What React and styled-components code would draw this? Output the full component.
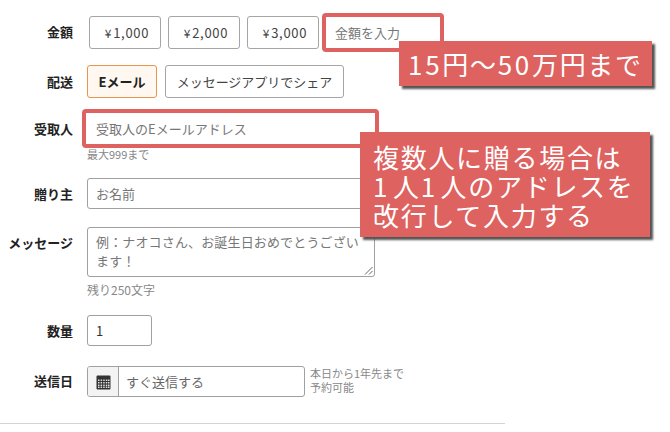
import React from 'react';
import styled, { createGlobalStyle } from 'styled-components';

const Global = createGlobalStyle`
  html, body { margin: 0; padding: 0; background: #fff; }
  body { font-family: "Noto Sans CJK JP", "Liberation Sans", sans-serif; color: #222; }
`;

const Page = styled.div`
  position: relative;
  width: 670px;
  height: 432px;
  overflow: hidden;
`;

const Form = styled.form`
  width: 505px;
  height: 424px;
  box-sizing: border-box;
  padding-top: 13px;
  border-bottom: 1px solid #d4d4d4;
`;

const Row = styled.div`
  display: flex;
  align-items: ${p => p.$top ? 'flex-start' : 'center'};
  height: ${p => p.$h}px;
  margin-bottom: ${p => p.$mb}px;
`;

const Label = styled.div`
  flex: none;
  width: 73px;
  margin-right: ${p => p.$gap || 14}px;
  padding-top: ${p => p.$pt || 0}px;
  margin-top: ${p => p.$nudge || 0}px;
  text-align: right;
  font-size: 13px;
  line-height: 18px;
  font-weight: 700;
  color: #222;
`;

const Buttons = styled.div`
  display: flex;
  gap: ${p => p.$gap}px;
  align-items: center;
`;

const Choice = styled.div`
  box-sizing: border-box;
  width: ${p => p.$w}px;
  height: 33px;
  display: flex;
  align-items: center;
  justify-content: center;
  padding-left: ${p => p.$pl || 0}px;
  border: 1px solid ${p => p.$active ? '#e8954f' : '#a5a5a5'};
  border-radius: 3px;
  background: ${p => p.$active ? '#fff8f1' : '#fff'};
  font-size: 13px;
  font-weight: ${p => p.$active ? 700 : 400};
  color: ${p => p.$active ? '#222' : '#444'};
  letter-spacing: ${p => p.$track || 0}px;
`;

const Yen = styled.span`
  margin-right: 1px;
  font-size: 12px;
`;

const Field = styled.div`
  box-sizing: border-box;
  flex: none;
  width: ${p => p.$w}px;
  height: ${p => p.$h}px;
  display: flex;
  align-items: center;
  margin-left: ${p => p.$ml || 0}px;
  padding-left: ${p => p.$pl || 8}px;
  border: ${p => p.$marked ? '4px solid #dd6260' : '1px solid #a0a0a0'};
  border-radius: ${p => p.$marked ? 4 : 3}px;
  background: #fff;
  font-size: 13px;
  color: ${p => p.$value ? '#333' : '#777'};
`;

const Stack = styled.div`
  display: flex;
  flex-direction: column;
`;

const Hint = styled.div`
  font-size: ${p => p.$size || 11}px;
  line-height: ${p => p.$lh || 14}px;
  color: #888;
  margin-top: ${p => p.$mt || 0}px;
  margin-left: ${p => p.$ml || 0}px;
`;

const TextArea = styled.div`
  position: relative;
  box-sizing: border-box;
  width: 288px;
  height: 50px;
  padding: 4px 8px 0;
  border: 1px solid #a0a0a0;
  border-radius: 3px;
  font-size: 13px;
  line-height: 19px;
  letter-spacing: 0.15px;
  color: #777;
`;

const Grip = styled.svg`
  position: absolute;
  right: 1px;
  bottom: 1px;
  width: 9px;
  height: 9px;
`;

const DateGroup = styled.div`
  box-sizing: border-box;
  flex: none;
  width: 218px;
  height: 31px;
  display: flex;
  border: 1px solid #a0a0a0;
  border-radius: 3px;
  overflow: hidden;
`;

const Addon = styled.div`
  flex: none;
  width: 30px;
  display: flex;
  align-items: center;
  justify-content: center;
  background: #f3f3f3;
  border-right: 1px solid #a0a0a0;
`;

const DateText = styled.div`
  display: flex;
  align-items: center;
  padding-left: 7px;
  padding-bottom: 1px;
  font-size: 13px;
  color: #666;
`;

const Callout = styled.div`
  position: absolute;
  left: ${p => p.$x}px;
  top: ${p => p.$y}px;
  width: ${p => p.$w}px;
  height: ${p => p.$h}px;
  box-sizing: border-box;
  padding: ${p => p.$pad};
  background: #dd6260;
  box-shadow: 3px 3px 2px #555;
  color: #fff;
  font-size: 26px;
  line-height: 29px;
  letter-spacing: 1.7px;
  white-space: nowrap;
`;

const Digits = styled.span`
  letter-spacing: ${p => p.$track}px;
`;

function CalendarIcon() {
  return (
    <svg width="15" height="16" viewBox="0 0 15 16">
      <path d="M1.5 1.5h12a1 1 0 0 1 1 1v12a1 1 0 0 1-1 1h-12a1 1 0 0 1-1-1v-12a1 1 0 0 1 1-1z" fill="#333" />
      <g fill="#f3f3f3">
        {[6, 8.5, 11, 13].map(y =>
          [2, 4.6, 7.2, 9.8, 12].map(x => <rect key={`${x}-${y}`} x={x} y={y - 0.4} width="1.5" height="1.3" />)
        )}
      </g>
    </svg>
  );
}

export default function App() {
  return (
    <Page>
      <Global />
      <Form>
        <Row $h={39} $mb={13}>
          <Label $gap={16} $nudge={-2}>金額</Label>
          <Buttons $gap={7}>
            <Choice $w={72} $track={0.7} $pl={4}><Yen>¥</Yen>1,000</Choice>
            <Choice $w={72} $track={0.7} $pl={4}><Yen>¥</Yen>2,000</Choice>
            <Choice $w={72} $track={0.7} $pl={4}><Yen>¥</Yen>3,000</Choice>
          </Buttons>
          <Field $w={122} $h={39} $marked $pl={9} $ml={3}>金額を入力</Field>
        </Row>
        <Row $h={33} $mb={11}>
          <Label>配送</Label>
          <Buttons $gap={8}>
            <Choice $w={70} $active>Eメール</Choice>
            <Choice $w={179}>メッセージアプリでシェア</Choice>
          </Buttons>
        </Row>
        <Row $h={39} $top $mb={0}>
          <Label $gap={9} $pt={11}>受取人</Label>
          <Field $w={297} $h={39} $marked $pl={10}>受取人のEメールアドレス</Field>
        </Row>
        <Row $h={30} $top $mb={0}>
          <Label />
          <Hint $lh={13}>最大999まで</Hint>
        </Row>
        <Row $h={31} $mb={18}>
          <Label>贈り主</Label>
          <Field $w={288} $h={31}>お名前</Field>
        </Row>
        <Row $h={78} $top $mb={10}>
          <Label $pt={7}>メッセージ</Label>
          <Stack>
            <TextArea>
              例：ナオコさん、お誕生日おめでとうございます！
              <Grip viewBox="0 0 9 9">
                <path d="M1 8.5L8.5 1M5 8.5L8.5 5" stroke="#666" strokeWidth="1" />
              </Grip>
            </TextArea>
            <Hint $size={12} $lh={18} $mt={4}>残り250文字</Hint>
          </Stack>
        </Row>
        <Row $h={31} $mb={20}>
          <Label>数量</Label>
          <Field $w={65} $h={31} $value>1</Field>
        </Row>
        <Row $h={31} $mb={0}>
          <Label $nudge={-2}>送信日</Label>
          <DateGroup>
            <Addon><CalendarIcon /></Addon>
            <DateText>すぐ送信する</DateText>
          </DateGroup>
          <Hint $ml={5} $mt={-3}>本日から1年先まで<br />予約可能</Hint>
        </Row>
      </Form>
      <Callout $x={399} $y={41} $w={253} $h={45} $pad="8px 0 0 9px">
        <Digits $track={2.7}>15</Digits>円〜<Digits $track={2.7}>50</Digits>万円まで
      </Callout>
      <Callout $x={360} $y={132} $w={290} $h={105} $pad="10px 0 0 13px">
        複数人に贈る場合は<br />
        <Digits $track={5.5}>1</Digits>人<Digits $track={5.5}>1</Digits>人のアドレスを<br />
        改行して入力する
      </Callout>
    </Page>
  );
}
